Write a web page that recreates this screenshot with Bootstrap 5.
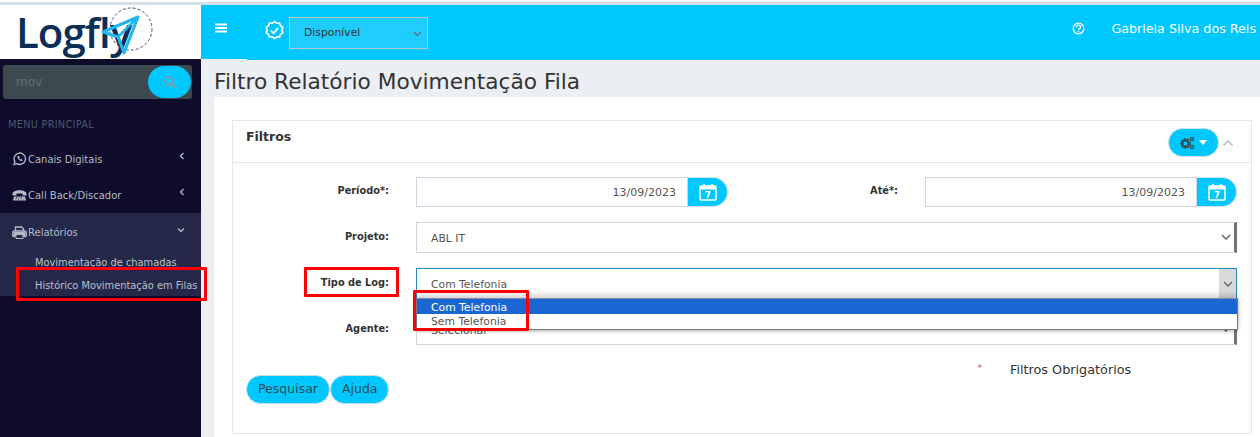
<!doctype html>
<html lang="pt-BR">
<head>
<meta charset="utf-8">
<title>Logfly</title>
<link href="https://cdn.jsdelivr.net/npm/bootstrap@5.3.0/dist/css/bootstrap.min.css" rel="stylesheet">
<style>
html,body{height:437px;overflow:hidden;}
body{font-family:"DejaVu Sans",sans-serif;background:#ebeef3;color:#333;font-size:11px;position:relative;}
.strip{height:5px;background:linear-gradient(#fff 0 2px,#d5dee5 2px);}
.shell{height:432px;}
.side{width:201px;background:#0e0b2b;flex:none;}
.logo-box{height:54px;background:#fff;position:relative;padding:5px 0 0 16px;}
.logo-word{font-family:"Open Sans",sans-serif;font-weight:600;font-size:42px;line-height:44px;color:#0b2f57;letter-spacing:-1px;}
.logo-mark{position:absolute;left:100px;top:0;}
.search-bar{margin:6px 9px 0 3px;height:34px;background:#3c4a50;border-radius:3px;padding:1px;}
.search-bar span{color:#617076;font-size:12px;padding-left:12px;}
.search-go{width:43px;height:32px;background:#00c8ff;border-radius:16px;}
.menu-title{color:#4a5a6c;font-size:9.8px;letter-spacing:.25px;margin:20px 0 0 8px;line-height:12px;}
.menu-row{color:#b4bcc6;font-size:10px;height:36px;padding:0 12px 0 11px;}
.row-first{height:38px;padding-top:4px;padding-bottom:2px;margin-top:8px;}
.row-tall{height:38px;padding-top:1px;}
.menu-ico{width:17px;flex:none;}
.menu-arrow{margin-left:auto;margin-right:4px;margin-top:-6px;}
.menu-open{background:#252848;height:83px;margin-top:0;}
.sub-row{color:#b9c1cb;font-size:9.85px;line-height:23px;padding-left:35px;white-space:nowrap;}
.main-col{min-width:0;}
.topbar{height:55px;background:#00c8ff;padding:0 4px 0 14px;color:#fff;position:relative;}
.topbar::after{content:"";position:absolute;left:0;bottom:0;width:46px;height:1px;background:#ebeef3;}
.burger{margin-bottom:10px;}
.badge-ico{margin-left:37px;}
.status-sel{width:139px;height:32px;background:#1ecdfe;border:1px solid #b9c7cb;color:#333;font-size:10.8px;padding:2px 5px 0 14px;}
.user-box{margin-bottom:7px;}
.user-name{font-size:12.7px;margin-left:26px;}
.page-title{height:37px;font-size:21.7px;line-height:44px;color:#333;padding-left:13px;white-space:nowrap;}
.sheet{height:340px;background:#fff;margin-left:13px;padding:23px 8px 0 18px;}
.filter-box{border:1px solid #e7e7e7;border-bottom-left-radius:3px;height:314px;}
.filter-head{height:42px;border-bottom:1px solid #e7e7e7;padding:7px 17px 0 13px;}
.filter-head b{font-size:12.5px;color:#333;}
.chev-up{margin-left:3px;}
.gear-btn{width:51px;height:29px;background:#00c8ff;border-radius:15px;border:1px solid #d5e2e8;}
.filter-body{padding:14px 14px 0 0;}
.form-line{height:46px;}
.line-first{height:45px;}
.lab{width:156px;text-align:right;font-weight:700;font-size:9.8px;color:#333;flex:none;margin-top:-16px;}
.lab2{width:170px;}
.field{height:31px;border:1px solid #cfd4de;color:#555;font-size:10.8px;padding:4px 3px 0 14px;background:#fff;margin-left:27px;}
.field-wide{width:821px;}
.field-bar{border-right:3px solid #6f7377;}
.field-bar svg{margin-top:-6px;}
.field-date{justify-content:flex-end;width:272px;height:30px;padding:2px 11px 0 0;font-size:11px;}
.field-date2{width:272px;height:30px;justify-content:flex-end;padding:2px 11px 0 0;font-size:11px;}
.cal-btn{width:40px;height:30px;background:#00c8ff;border-radius:0 15px 15px 0;border:1px solid #d5e2e8;border-left:0;}
.field-focus{border-color:#2a8cc0;padding-right:0;padding-top:0;}
.field-focus span{padding-top:4px;}
.caret-cell{width:17px;height:100%;background:#d9dadb;}
.action-line{margin-top:15px;padding-left:13px;}
.pill{height:29px;background:#00c8ff;border-radius:15px;border:1px solid #cbdde4;color:#2c4a55;font-size:12.5px;padding:0 11px;line-height:26px;}
.legend{margin-left:588px;font-size:12.8px;color:#333;margin-top:-15px;}
.legend i{color:#c0512b;font-style:normal;font-size:9px;margin-right:28px;vertical-align:3px;}
.drop-list{position:absolute;left:416px;top:298px;width:822px;height:32px;background:#fff;border:1px solid #777;border-top:1px solid #889;box-shadow:0 -3px 6px rgba(0,0,0,.18),0 2px 3px rgba(0,0,0,.2);font-size:10.8px;line-height:14.5px;color:#555;}
.drop-on{background:#1a66d2;color:#fff;padding:2px 0 0 14px;height:15px;}
.drop-off{padding:1px 0 0 14px;}
.red-mark{position:absolute;border:3px solid #f00;border-radius:1px;}
.mark-a{left:16px;top:267px;width:191px;height:34px;}
.mark-b{left:304px;top:267px;width:95px;height:30px;}
.mark-c{left:413px;top:290px;width:116px;height:41px;}
</style>
</head>
<body>
<div class="strip"></div>
<div class="shell d-flex">
  <aside class="side">
    <div class="logo-box">
      <div class="logo-word">Logfly</div>
      <svg class="logo-mark" width="54" height="54" viewBox="0 0 54 54"><circle cx="31" cy="24" r="21" fill="none" stroke="#3f5878" stroke-width="1" stroke-dasharray="3 2"/><path d="M3 27 38 12 24 48 18 32Z" fill="none" stroke="#1fb7ee" stroke-width="3" stroke-linejoin="round"/><path d="M18 32 38 12" stroke="#1fb7ee" stroke-width="2.5"/></svg>
    </div>
    <div class="search-bar d-flex align-items-center">
      <span class="flex-grow-1">mov</span>
      <div class="search-go d-flex align-items-center justify-content-center"><svg width="14" height="14" viewBox="0 0 14 14"><circle cx="6" cy="6" r="4" fill="none" stroke="#8e9ca3" stroke-width="1.6"/><path d="M9 9l4 4" stroke="#8e9ca3" stroke-width="2"/></svg></div>
    </div>
    <div class="menu-title">MENU PRINCIPAL</div>
    <div class="menu-row row-first d-flex align-items-center">
      <svg class="menu-ico" width="14" height="14" viewBox="0 0 14 14"><path d="M1.500 12.500 2.400 9.700A5.700 5.700 0 1 1 4.300 11.600Z" fill="none" stroke="#b4bcc6" stroke-width="1.300"/><path d="M5 4.200c-.8 1.700 2.300 5.100 4.500 4.800l.8-1-1.500-.9-.6.5c-.7-.3-1.200-.9-1.500-1.600l.5-.6-.8-1.400Z" fill="#b4bcc6"/></svg>
      <span>Canais Digitais</span>
      <svg class="menu-arrow" width="6" height="8" viewBox="0 0 6 8"><path d="M4.500 1 1.500 4l3 3" fill="none" stroke="#b4bcc6" stroke-width="1.300"/></svg>
    </div>
    <div class="menu-row d-flex align-items-center">
      <svg class="menu-ico" width="15" height="14" viewBox="0 0 15 14"><path d="M.5 6C.5 1 14.500 1 14.500 6v1.500h-4V5.500h-6v2h-4Z" fill="#b4bcc6"/><path d="M2 8.500h11l1 4H1Z" fill="#b4bcc6"/><path d="M4 9.500h1m1.500 0h1m1.500 0h1M3.500 11h1M6 11h1m1.500 0h1m1.500 0h.5" stroke="#0e0b2b" stroke-width=".8"/></svg>
      <span>Call Back/Discador</span>
      <svg class="menu-arrow" width="6" height="8" viewBox="0 0 6 8"><path d="M4.500 1 1.500 4l3 3" fill="none" stroke="#b4bcc6" stroke-width="1.300"/></svg>
    </div>
    <div class="menu-open">
      <div class="menu-row row-tall d-flex align-items-center">
        <svg class="menu-ico" width="14" height="13" viewBox="0 0 14 13"><path d="M3 5V1h6l2 2v2M3 10.500H1a.8.8 0 0 1-.8-.8V6.500C.2 5.500 1 5 2 5h10c1 0 1.800.5 1.800 1.500v3.200a.8.8 0 0 1-.8.8h-2" fill="none" stroke="#b4bcc6" stroke-width="1.300"/><path d="M1 6h12v4H1Z" fill="#b4bcc6"/><path d="M3.500 8.500h7v4h-7Z" fill="#252848" stroke="#b4bcc6"/></svg>
        <span>Relatórios</span>
        <svg class="menu-arrow" width="8" height="6" viewBox="0 0 8 6"><path d="M1 1.500 4 4.500l3-3" fill="none" stroke="#b4bcc6" stroke-width="1.300"/></svg>
      </div>
      <div class="sub-row">Movimentação de chamadas</div>
      <div class="sub-row">Histórico Movimentação em Filas</div>
    </div>
  </aside>
  <div class="main-col flex-grow-1">
    <header class="topbar d-flex align-items-center">
      <svg width="12" height="10" viewBox="0 0 12 10" class="burger"><path d="M0 1.500h12M0 5h12M0 8.500h12" stroke="#fff" stroke-width="2"/></svg>
      <svg width="21" height="21" viewBox="0 0 21 21" class="badge-ico me-1 mb-1"><path d="M10.500 1.500l2.300 1.700 2.800-.2.900 2.700 2.300 1.600-.9 2.700.9 2.700-2.300 1.600-.9 2.700-2.800-.2-2.300 1.700-2.300-1.700-2.800.2-.9-2.700-2.300-1.600.9-2.700-.9-2.700 2.300-1.600.9-2.700 2.800.2Z" fill="none" stroke="#fff" stroke-width="1.600"/><path d="M6.800 10.500l2.700 2.700 4.700-5" fill="none" stroke="#fff" stroke-width="1.700"/></svg>
      <div class="status-sel d-flex align-items-center justify-content-between">
        <span>Disponível</span>
        <svg width="9" height="6" viewBox="0 0 9 6"><path d="M1 1l3.500 3.500L8 1" fill="none" stroke="#5a7680" stroke-width="1.400"/></svg>
      </div>
      <div class="user-box ms-auto d-flex align-items-center">
        <svg width="13" height="13" viewBox="0 0 13 13"><circle cx="6.500" cy="6.500" r="5.300" fill="none" stroke="#fff" stroke-width="1.300"/><path d="M4.500 5.200c0-2.700 4-2.700 4 0 0 1.300-2 1.500-2 3" fill="none" stroke="#fff" stroke-width="1.200"/><circle cx="6.500" cy="9.800" r=".8" fill="#fff"/></svg>
        <span class="user-name">Gabriela Silva dos Reis</span>
      </div>
    </header>
    <h1 class="page-title fw-normal m-0">Filtro Relatório Movimentação Fila</h1>
    <div class="sheet">
      <section class="filter-box">
        <div class="filter-head d-flex justify-content-between align-items-start">
          <b>Filtros</b>
          <div class="d-flex align-items-center">
            <div class="gear-btn d-flex align-items-center justify-content-center gap-1">
              <svg width="15" height="14" viewBox="0 0 15 14"><circle cx="5.500" cy="7.500" r="3.300" fill="none" stroke="#34505b" stroke-width="2.600"/><circle cx="5.500" cy="7.500" r="4.800" fill="none" stroke="#34505b" stroke-width="1.200" stroke-dasharray="1.700 1.700"/><circle cx="12" cy="3" r="1.600" fill="none" stroke="#34505b" stroke-width="1.400"/><circle cx="12" cy="11" r="1.600" fill="none" stroke="#34505b" stroke-width="1.400"/></svg>
              <svg width="8" height="5" viewBox="0 0 8 5"><path d="M0 0h8L4 5Z" fill="#fff"/></svg>
            </div>
            <svg width="12" height="8" viewBox="0 0 12 8" class="chev-up"><path d="M1.500 6.500 6 2l4.500 4.500" fill="none" stroke="#c4c8cc" stroke-width="1.800"/></svg>
          </div>
        </div>
        <div class="filter-body">
          <div class="form-line line-first d-flex">
            <div class="lab align-self-center">Período*:</div>
            <div class="d-flex align-self-start">
              <div class="field field-date d-flex align-items-center">13/09/2023</div>
              <div class="cal-btn d-flex align-items-center justify-content-center"><svg width="18" height="18" viewBox="0 0 18 18"><rect x="1" y="3" width="16" height="14" rx="1" fill="none" stroke="#fff" stroke-width="1.500"/><path d="M1 3h16v3.500H1Z" fill="#fff"/><path d="M5 1v3m8-3v3" stroke="#fff" stroke-width="1.500"/><text x="9" y="15" text-anchor="middle" font-size="8.500" font-weight="700" fill="#fff" font-family="DejaVu Sans">7</text></svg></div>
            </div>
            <div class="lab lab2 align-self-center">Até*:</div>
            <div class="d-flex align-self-start">
              <div class="field field-date2 d-flex align-items-center">13/09/2023</div>
              <div class="cal-btn d-flex align-items-center justify-content-center"><svg width="18" height="18" viewBox="0 0 18 18"><rect x="1" y="3" width="16" height="14" rx="1" fill="none" stroke="#fff" stroke-width="1.500"/><path d="M1 3h16v3.500H1Z" fill="#fff"/><path d="M5 1v3m8-3v3" stroke="#fff" stroke-width="1.500"/><text x="9" y="15" text-anchor="middle" font-size="8.500" font-weight="700" fill="#fff" font-family="DejaVu Sans">7</text></svg></div>
            </div>
          </div>
          <div class="form-line d-flex">
            <div class="lab align-self-center">Projeto:</div>
            <div class="field field-wide field-bar d-flex align-items-center justify-content-between"><span>ABL IT</span><svg width="10" height="6" viewBox="0 0 10 6"><path d="M1 1l4 4 4-4" fill="none" stroke="#666" stroke-width="1.500"/></svg></div>
          </div>
          <div class="form-line d-flex">
            <div class="lab align-self-center">Tipo de Log:</div>
            <div class="field field-wide field-focus d-flex align-items-center justify-content-between"><span>Com Telefonia</span><div class="caret-cell d-flex align-items-center justify-content-center"><svg width="10" height="6" viewBox="0 0 10 6"><path d="M1 1l4 4 4-4" fill="none" stroke="#666" stroke-width="1.500"/></svg></div></div>
          </div>
          <div class="form-line d-flex">
            <div class="lab align-self-center">Agente:</div>
            <div class="field field-wide field-bar d-flex align-items-center justify-content-between"><span>Selecionar</span><svg width="10" height="6" viewBox="0 0 10 6"><path d="M1 1l4 4 4-4" fill="none" stroke="#666" stroke-width="1.500"/></svg></div>
          </div>
          <div class="action-line d-flex align-items-start">
            <div class="pill">Pesquisar</div>
            <div class="pill">Ajuda</div>
            <div class="legend"><i>*</i>Filtros Obrigatórios</div>
          </div>
        </div>
      </section>
    </div>
  </div>
</div>
<div class="drop-list"><div class="drop-on">Com Telefonia</div><div class="drop-off">Sem Telefonia</div></div>
<div class="red-mark mark-a"></div>
<div class="red-mark mark-b"></div>
<div class="red-mark mark-c"></div>
</body>
</html>
